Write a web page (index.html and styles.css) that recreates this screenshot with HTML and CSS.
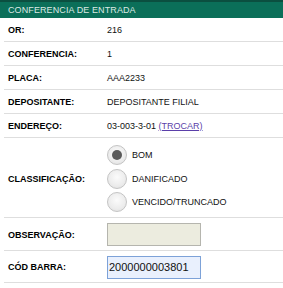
FILE: index.html
```html
<!DOCTYPE html>
<html lang="pt">
<head>
	<meta charset="UTF-8">
	<link rel="stylesheet" href="styles.css">
</head>
<body>
<div class="panel">
	<div class="head">CONFERENCIA DE ENTRADA</div>
	<div class="row">
		<span class="lbl">OR:</span>
		<span class="val">216</span>
	</div>
	<div class="row">
		<span class="lbl">CONFERENCIA:</span>
		<span class="val">1</span>
	</div>
	<div class="row">
		<span class="lbl">PLACA:</span>
		<span class="val">AAA2233</span>
	</div>
	<div class="row">
		<span class="lbl">DEPOSITANTE:</span>
		<span class="val">DEPOSITANTE FILIAL</span>
	</div>
	<div class="row">
		<span class="lbl">ENDEREÇO:</span>
		<span class="val">03-003-3-01 <a href="#" class="link">(TROCAR)</a></span>
	</div>
	<div class="row row-radio">
		<span class="lbl">CLASSIFICAÇÃO:</span>
		<div class="opts">
			<label class="opt"><span class="radio on"></span>BOM</label>
			<label class="opt"><span class="radio"></span>DANIFICADO</label>
			<label class="opt"><span class="radio"></span>VENCIDO/TRUNCADO</label>
		</div>
	</div>
	<div class="row row-input">
		<span class="lbl">OBSERVAÇÃO:</span>
		<div class="box obs"></div>
	</div>
	<div class="row row-input">
		<span class="lbl">CÓD BARRA:</span>
		<div class="box code">2000000003801</div>
	</div>
</div>
</body>
</html>
```

FILE: styles.css
```css
*{
	margin:0; padding:0; box-sizing:border-box;
}
body{
	background:#fff;
	font-family:"Liberation Sans", Arial, sans-serif;
	font-size:9px; color:#111;
}
.panel{
	width:283px;
}
.head{
	height:18px;
	border-top:2px solid #0b4f40;
	background:#0b6f59;
	color:#dce9e4;
	padding-left:8px;
	line-height:16px;
	letter-spacing:0.1px;
}
.row{
	display:grid;
	grid-template-columns:99px 1fr;
	align-items:center;
	height:24px;
	margin-left:4px;
	padding-left:4px;
	padding-top:1px;
	border-bottom:1px solid #dedede;
}
.row:first-of-type{
	height:25px;
}
.lbl{
	font-weight:bold;
	color:#000;
}
.link{
	color:#5b3fa9;
}
.row-radio{
	height:80px;
	padding-top:2px;
}
.opts{
	display:flex; flex-direction:column;
	gap:3.5px;
}
.opt{
	display:flex; align-items:center;
	height:20px; gap:5px;
}
.radio{
	width:20px; height:20px;
	border-radius:50%;
	border:1px solid #c4c4c4;
	background:radial-gradient(circle at 50% 40%, #fbfbfb 0, #ececec 60%, #dcdcdc 100%);
	display:flex; align-items:center; justify-content:center;
}
.radio.on::after{
	content:""; width:10px; height:10px;
	border-radius:50%;
	background:#5a5a5a;
}
.row-input{
	height:33px;
}
.row-input:last-child{
	height:32px;
}
.box{
	width:94px; height:23px;
	border:1px solid #b5b5ae;
}
.obs{
	background:#ececdf;
}
.code{
	background:#e9f0fd;
	border-color:#7da2d8;
	font-size:11px;
	line-height:21px;
	padding-left:1px;
	color:#111;
}
```
